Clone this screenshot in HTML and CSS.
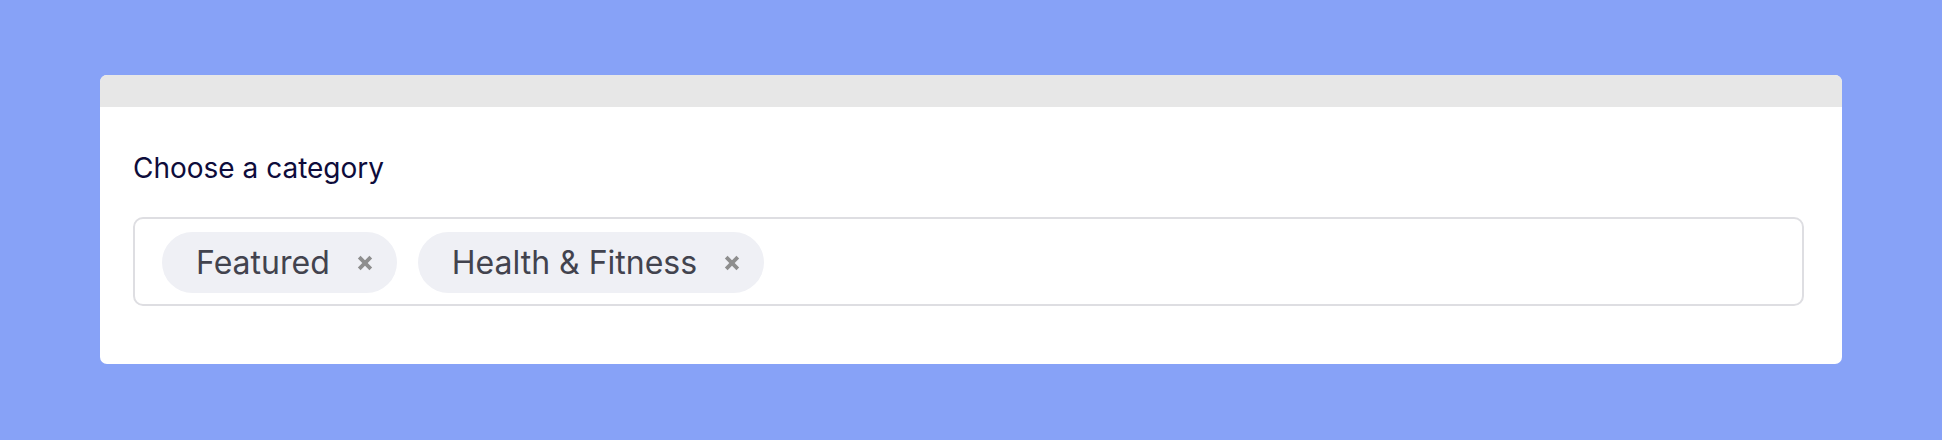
FILE: index.html
```html
<!DOCTYPE html>
<html>
    <head>
        <meta charset="utf-8">
        <title>Choose a category</title>
        <link rel="stylesheet" href="styles.css">
    </head>
    <body>
        <main class="card">
            <div class="card-head"></div>
            <div class="card-body">
                <label class="field-label" for="cats">Choose a category</label>
                <div class="tag-input" id="cats">
                    <span class="tag">Featured<button class="tag-remove" aria-label="Remove Featured"><svg viewBox="0 0 16 16" width="16" height="16"><path d="M2.2 2.2L13.8 13.8M13.8 2.2L2.2 13.8"/></svg></button></span>
                    <span class="tag">Health &amp; Fitness<button class="tag-remove" aria-label="Remove Health &amp; Fitness"><svg viewBox="0 0 16 16" width="16" height="16"><path d="M2.2 2.2L13.8 13.8M13.8 2.2L2.2 13.8"/></svg></button></span>
                </div>
            </div>
        </main>
    </body>
</html>
```
FILE: styles.css
```css
html {background:#87a2f7;}
body {margin:0;padding:75px 100px 0 100px;font-family:Inter, "Noto Sans", sans-serif;}
.card {background:#fff;border-radius:7px;overflow:hidden;}
.card-head {height:32px;background:#e7e7e7;}
.card-body {padding:44px 38px 58px 33px;}
.field-label {display:block;color:#0e0c3b;font-size:28px;line-height:34px;margin-bottom:32px;}
.tag-input {display:flex;gap:21px;align-items:center;border:2px solid #dedee2;border-radius:10px;padding:13px 27px 11px 27px;min-height:61px;}
.tag {display:inline-flex;align-items:center;height:61px;padding:0 24px 0 34px;background:#eff0f5;border-radius:31px;color:#42434e;font-size:32px;}
.tag-remove {display:flex;margin-left:27px;padding:0;border:0;background:none;cursor:pointer;}
.tag-remove svg {stroke:#8e8e8e;stroke-width:3.8;}
```
